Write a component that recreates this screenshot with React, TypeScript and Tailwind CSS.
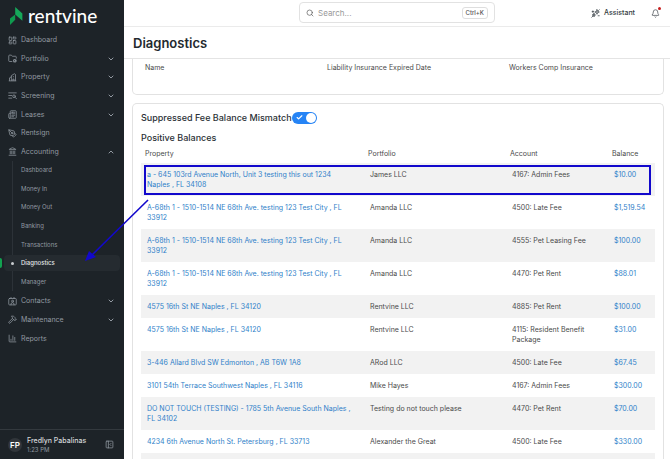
import { useState } from "react";
import {
  BarChart3,
  Bell,
  Check,
  ChevronDown,
  ChevronUp,
  FolderCog,
  Hammer,
  Landmark,
  LayoutDashboard,
  Newspaper,
  PanelLeftClose,
  PenTool,
  Search,
  type LucideIcon,
} from "lucide-react";

type NavIcon = LucideIcon | ((props: { size?: number }) => React.ReactNode);
type NavItem = { label: string; icon: NavIcon; chevron?: "down" | "up" };

function PropertyIcon({ size = 9 }: { size?: number }) {
  return (
    <svg width={size} height={size} viewBox="0 0 24 24" fill="none" stroke="currentColor" strokeWidth="2" strokeLinejoin="round">
      <path d="M9 21V7l8-5 3 2v17M2 21h20M4 21v-8l5-3M13 21v-5h3v5M13 10h3" />
    </svg>
  );
}

function ScreeningIcon({ size = 9 }: { size?: number }) {
  return (
    <svg width={size} height={size} viewBox="0 0 24 24" fill="none" stroke="currentColor" strokeWidth="2" strokeLinecap="round">
      <path d="M2 5h20M2 12h8M2 19h8" />
      <circle cx="16" cy="14" r="3.5" />
      <path d="m19 17 4 4" />
    </svg>
  );
}

function ContactsIcon({ size = 9 }: { size?: number }) {
  return (
    <svg width={size} height={size} viewBox="0 0 24 24" fill="none" stroke="currentColor" strokeWidth="2" strokeLinecap="round">
      <rect x="2" y="4" width="20" height="17" rx="2" />
      <path d="M8 1v3M16 1v3M8 21v-2a4 4 0 0 1 8 0v2" />
      <circle cx="12" cy="11" r="2.5" />
    </svg>
  );
}

function AssistantIcon({ size = 9 }: { size?: number }) {
  return (
    <svg width={size} height={size} viewBox="0 0 24 24" fill="none" stroke="currentColor" strokeWidth="2" strokeLinejoin="round" strokeLinecap="round">
      <path d="m16 2 1.5 4.5L22 8l-4.500 1.500L16 14l-1.500-4.500L10 8l4.500-1.500z" />
      <path d="m8 12 1 3 3 1-3 1-1 4-1-4-4-1 4-1z" />
      <path d="m2 22 3-3M5 5v4M3 7h4M19 18h3M22 2l-2 2" />
    </svg>
  );
}

const topNav: NavItem[] = [
  { label: "Dashboard", icon: LayoutDashboard },
  { label: "Portfolio", icon: FolderCog, chevron: "down" },
  { label: "Property", icon: PropertyIcon, chevron: "down" },
  { label: "Screening", icon: ScreeningIcon, chevron: "down" },
  { label: "Leases", icon: Newspaper, chevron: "down" },
  { label: "Rentsign", icon: PenTool },
  { label: "Accounting", icon: Landmark, chevron: "up" },
];

const accountingNav = ["Dashboard", "Money In", "Money Out", "Banking", "Transactions", "Diagnostics", "Manager"];

const bottomNav: NavItem[] = [
  { label: "Contacts", icon: ContactsIcon, chevron: "down" },
  { label: "Maintenance", icon: Hammer, chevron: "down" },
  { label: "Reports", icon: BarChart3 },
];

const balances = [
  { property: "a - 645 103rd Avenue North, Unit 3 testing this out 1234 Naples , FL 34108", portfolio: "James LLC", account: "4167: Admin Fees", balance: "$10.00" },
  { property: "A-68th 1 - 1510-1514 NE 68th Ave. testing 123 Test City , FL 33912", portfolio: "Amanda LLC", account: "4500: Late Fee", balance: "$1,519.54" },
  { property: "A-68th 1 - 1510-1514 NE 68th Ave. testing 123 Test City , FL 33912", portfolio: "Amanda LLC", account: "4555: Pet Leasing Fee", balance: "$100.00" },
  { property: "A-68th 1 - 1510-1514 NE 68th Ave. testing 123 Test City , FL 33912", portfolio: "Amanda LLC", account: "4470: Pet Rent", balance: "$88.01" },
  { property: "4575 16th St NE Naples , FL 34120", portfolio: "Rentvine LLC", account: "4885: Pet Rent", balance: "$100.00" },
  { property: "4575 16th St NE Naples , FL 34120", portfolio: "Rentvine LLC", account: "4115: Resident Benefit Package", balance: "$31.00" },
  { property: "3-446 Allard Blvd SW Edmonton , AB T6W 1A8", portfolio: "ARod LLC", account: "4500: Late Fee", balance: "$67.45" },
  { property: "3101 54th Terrace Southwest Naples , FL 34116", portfolio: "Mike Hayes", account: "4167: Admin Fees", balance: "$300.00" },
  { property: "DO NOT TOUCH (TESTING) - 1785 5th Avenue South Naples , FL 34102", portfolio: "Testing do not touch please", account: "4470: Pet Rent", balance: "$70.00" },
  { property: "4234 6th Avenue North St. Petersburg , FL 33713", portfolio: "Alexander the Great", account: "4500: Late Fee", balance: "$330.00" },
];

function Logo() {
  return (
    <a href="#" className="flex h-[31px] shrink-0 items-center gap-[5px] pl-[9px] text-white">
      <svg viewBox="0 0 14 20" className="h-5 w-[14px]">
        <path d="M6.2 1 13.4 7.6v7.2L6.2 8.4z" fill="#16a85a" />
        <path d="M1 12.6 6.2 8.4v5.4L1 19z" fill="#0f9a4e" />
      </svg>
      <span className="font-['Lato',sans-serif] text-[19px] font-medium leading-5">rentvine</span>
    </a>
  );
}

function NavList({ items }: { items: NavItem[] }) {
  return (
    <>
      {items.map(({ label, icon: Icon, chevron }) => (
        <li key={label} className="flex">
          <a href="#" className="flex flex-1 items-center gap-1 pl-2 pr-[9px]">
            <Icon size={9} />
            <span className="flex-1">{label}</span>
            {chevron === "down" && <ChevronDown size={8} strokeWidth={3} />}
            {chevron === "up" && <ChevronUp size={8} strokeWidth={3} />}
          </a>
        </li>
      ))}
    </>
  );
}

function Sidebar() {
  return (
    <aside className="flex w-[124px] shrink-0 flex-col bg-[#1d2328] text-[#9299a1]">
      <Logo />
      <nav className="flex-1 text-[7px] leading-[10px]">
        <ul className="grid h-[130px] auto-rows-fr">
          <NavList items={topNav} />
        </ul>
        <ul className="relative grid h-[130px] auto-rows-fr text-[6px]">
          <li aria-hidden="true" className="absolute inset-y-0 left-3 w-px bg-[#2c3238]" />
          {accountingNav.map((label) =>
            label === "Diagnostics" ? (
              <li key={label} className="relative flex items-center">
                <span className="absolute left-0 h-[10px] w-[2px] rounded-r-sm bg-[#12a150]" />
                <a href="#" aria-current="page" className="mx-1 flex h-4 flex-1 items-center gap-[7px] rounded bg-[#252b30] pl-[7px] font-medium text-[#e3e6e8]">
                  <span className="size-[3px] rounded-full bg-[#c9cdd0]" />
                  {label}
                </a>
              </li>
            ) : (
              <li key={label} className="flex">
                <a href="#" className="flex flex-1 items-center pl-[21px]">{label}</a>
              </li>
            ),
          )}
        </ul>
        <ul className="mt-px grid h-14 auto-rows-fr">
          <NavList items={bottomNav} />
        </ul>
      </nav>
      <div className="flex h-[30px] shrink-0 items-center border-t border-[#33393e] pl-2 pr-[10px]">
        <span className="flex size-[14px] items-center justify-center rounded-full bg-[#31363b] text-[8px] font-semibold text-white">FP</span>
        <div className="ml-[5px] flex-1">
          <p className="text-[7px] font-medium leading-[10px] text-[#d5d8da]">Fredlyn Pabalinas</p>
          <p className="text-[6px] leading-[8px]">1:23 PM</p>
        </div>
        <button type="button" aria-label="Collapse sidebar">
          <PanelLeftClose size={9} />
        </button>
      </div>
    </aside>
  );
}

function TopBar() {
  return (
    <header className="relative flex h-[27px] shrink-0 items-center justify-end border-b border-[#ebebeb] pr-[10px]">
      <label className="absolute inset-x-[175px] top-[2px] flex h-[21px] items-center gap-1 rounded-[4px] border border-[#e2e2e2] px-[6px]">
        <Search size={8} className="text-[#555]" />
        <input
          type="search"
          placeholder="Search..."
          aria-label="Search"
          className="min-w-0 flex-1 text-[8px] leading-[10px] outline-none placeholder:text-[#999]"
        />
        <kbd className="rounded-[3px] border border-[#dedede] px-[3px] font-['Inter',sans-serif] text-[6px] font-medium leading-[10px] text-[#555]">Ctrl+K</kbd>
      </label>
      <button type="button" className="flex items-center gap-1 text-[7px] font-medium text-[#333b41]">
        <AssistantIcon />
        Assistant
      </button>
      <button type="button" aria-label="Notifications" className="relative ml-4 text-[#4b5157]">
        <Bell size={9} />
        <span className="absolute -right-px -top-[2px] size-[3px] rounded-full bg-[#c81e1e]" />
      </button>
    </header>
  );
}

function MismatchToggle() {
  const [on, setOn] = useState(true);

  return (
    <div className="flex items-center">
      <label htmlFor="suppressed" className="text-[9px] font-medium leading-3 text-[#2b3136]">
        Suppressed Fee Balance Mismatch
      </label>
      <span className="relative flex">
        <input
          id="suppressed"
          type="checkbox"
          role="switch"
          checked={on}
          onChange={(e) => setOn(e.target.checked)}
          className="peer h-3 w-[25px] appearance-none rounded-full bg-gray-300 checked:bg-[#2684f5]"
        />
        <Check size={7} strokeWidth={4} className="pointer-events-none absolute left-1 top-[2px] text-white" />
        <span className="pointer-events-none absolute left-px top-px size-[10px] rounded-full bg-white peer-checked:left-[14px]" />
      </span>
    </div>
  );
}

function BalanceTable() {
  return (
    <table className="w-full table-fixed text-left text-[#4a4a4a]">
      <colgroup>
        <col />
        <col className="w-[142px]" />
        <col className="w-[102px]" />
        <col className="w-[47px]" />
      </colgroup>
      <thead>
        <tr className="h-[18px] align-middle">
          <th className="px-1 font-normal">Property</th>
          <th className="px-1 font-normal">Portfolio</th>
          <th className="px-1 font-normal">Account</th>
          <th className="px-1 font-normal">Balance</th>
        </tr>
      </thead>
      <tbody>
        {balances.map((row, i) => (
          <tr key={i} className="align-top odd:bg-[#f2f2f2]">
            <td className="pb-[6px] pl-[6px] pr-[10px] pt-[7px]">
              <a href="#" className="text-[#2f7fc9]">{row.property}</a>
            </td>
            <td className="pb-[6px] pl-[6px] pt-[7px]">{row.portfolio}</td>
            <td className="pb-[6px] pl-[6px] pr-[10px] pt-[7px]">{row.account}</td>
            <td className="pb-[6px] pl-[6px] pt-[7px]">
              <a href="#" className="text-[#2f7fc9]">{row.balance}</a>
            </td>
          </tr>
        ))}
        <tr className="h-6 odd:bg-[#f2f2f2]">
          <td colSpan={4} />
        </tr>
      </tbody>
    </table>
  );
}

export default function App() {
  return (
    <div className="relative flex h-screen overflow-hidden bg-white font-['Inter',sans-serif]">
      <Sidebar />
      <div className="flex min-w-0 flex-1 flex-col">
        <TopBar />
        <div className="flex h-8 shrink-0 items-center border-b border-[#e4e4e4] pl-[9px]">
          <h1 className="text-[13px] font-semibold leading-4 text-[#23292e]">Diagnostics</h1>
        </div>
        <main className="flex min-h-0 flex-1 flex-col gap-2 overflow-hidden pl-2 pr-[6px] text-[7px] leading-[10px]">
          <section className="shrink-0 rounded-b-[5px] border border-t-0 border-[#e2e2e2] px-2 pb-[21px] pt-1">
            <table className="w-full table-fixed text-left text-[#4a4a4a]">
              <thead>
                <tr>
                  <th className="w-[182px] px-1 font-normal">Name</th>
                  <th className="w-[182px] px-1 font-normal">Liability Insurance Expired Date</th>
                  <th className="px-1 font-normal">Workers Comp Insurance</th>
                </tr>
              </thead>
            </table>
          </section>
          <section className="shrink-0 rounded-t-[5px] border border-b-0 border-[#e2e2e2] px-2 pt-2">
            <MismatchToggle />
            <h2 className="mt-2 text-[9px] font-medium leading-3 text-[#2b3136]">Positive Balances</h2>
            <div className="relative mt-px">
              <BalanceTable />
              {/* callout around the first row */}
              <div className="pointer-events-none absolute left-[3px] right-1 top-5 h-[30px] border-2 border-[#1208cc]" />
            </div>
          </section>
        </main>
      </div>
      <svg viewBox="0 0 66 66" className="pointer-events-none absolute left-[84px] top-[198px] size-[66px]">
        <path d="M64 2 8 57" stroke="#1208cc" strokeWidth="1.6" />
        <path d="M1 63 5 53l7 6z" fill="#1208cc" />
      </svg>
    </div>
  );
}
